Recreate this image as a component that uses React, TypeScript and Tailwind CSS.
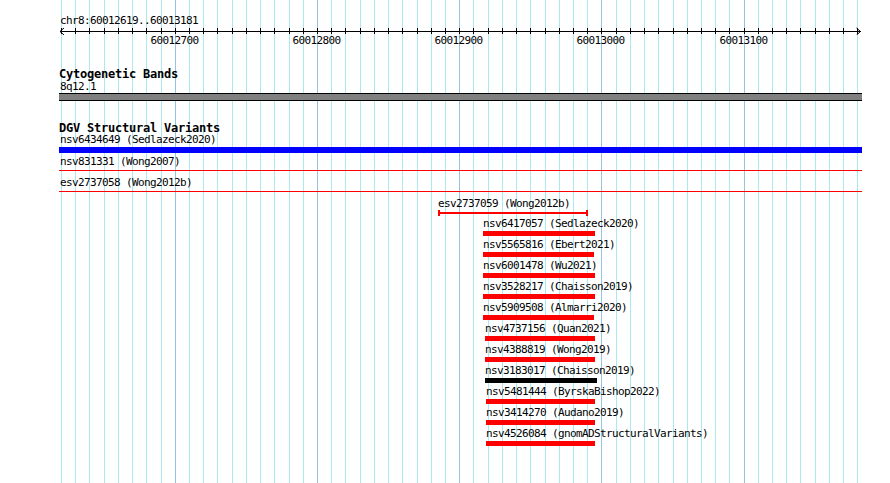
import React from "react";

const xk = (k: number) => Math.round(61 + 14.221 * k);
const LEFT = 59;

const majors = [
  { k: 8, label: "60012700" },
  { k: 18, label: "60012800" },
  { k: 28, label: "60012900" },
  { k: 38, label: "60013000" },
  { k: 48, label: "60013100" },
];

const stacked = [
  { name: "nsv6417057 (Sedlazeck2020)", x1: 483, x2: 595, c: "red" },
  { name: "nsv5565816 (Ebert2021)", x1: 483, x2: 594, c: "red" },
  { name: "nsv6001478 (Wu2021)", x1: 483, x2: 595, c: "red" },
  { name: "nsv3528217 (Chaisson2019)", x1: 483, x2: 595, c: "red" },
  { name: "nsv5909508 (Almarri2020)", x1: 483, x2: 594, c: "red" },
  { name: "nsv4737156 (Quan2021)", x1: 485, x2: 595, c: "red" },
  { name: "nsv4388819 (Wong2019)", x1: 485, x2: 595, c: "red" },
  { name: "nsv3183017 (Chaisson2019)", x1: 485, x2: 597, c: "black" },
  { name: "nsv5481444 (ByrskaBishop2022)", x1: 486, x2: 595, c: "red" },
  { name: "nsv3414270 (Audano2019)", x1: 486, x2: 595, c: "red" },
  { name: "nsv4526084 (gnomADStructuralVariants)", x1: 486, x2: 595, c: "red" },
];

function Ruler() {
  const ticks = Array.from({ length: 57 }, (_, k) => xk(k) - LEFT + 0.5);
  return (
    <svg width={803} height={8} className="block">
      <g shapeRendering="crispEdges" stroke="#000" strokeWidth={1}>
        <line x1={1} y1={4.5} x2={801.5} y2={4.5} />
        {ticks.map((t, i) => (
          <line key={i} x1={t} y1={1} x2={t} y2={7} />
        ))}
      </g>
      <polyline points="5,1 1,4.5 5,8" fill="none" stroke="#000" strokeWidth={1} />
      <polyline points="797.5,1 801.5,4.5 797.5,8" fill="none" stroke="#000" strokeWidth={1} />
    </svg>
  );
}

export default function App() {
  return (
    <div className="relative w-[890px] h-[483px] overflow-hidden bg-white text-black font-['DejaVu_Sans_Mono','Liberation_Mono',monospace] text-[11px] tracking-[-0.62px] leading-[12px]">
      {/* grid lines (background layer) */}
      <div className="absolute inset-0">
        {Array.from({ length: 57 }, (_, k) => (
          <div
            key={k}
            className={k % 10 === 8 ? "absolute top-0 bottom-0 w-px bg-[#98c3e2]" : "absolute top-0 bottom-0 w-px bg-[#abe8ef]"}
            style={{ left: xk(k) }}
          />
        ))}
      </div>

      <div className="relative flex flex-col ml-[59px] w-[803px] pt-[15px]">
        <div className="h-[12px] pl-[1px] whitespace-nowrap">chr8:60012619..60013181</div>
        <Ruler />
        <div className="relative h-[12px]">
          {majors.map((m) => (
            <span
              key={m.k}
              className="absolute top-0 -translate-x-1/2 whitespace-nowrap"
              style={{ left: xk(m.k) - LEFT - 0.5 }}
            >
              {m.label}
            </span>
          ))}
        </div>

        <div className="mt-[21px] h-[13px] text-[12px] tracking-[-0.22px] leading-[13px] font-bold whitespace-nowrap">Cytogenetic Bands</div>
        <div className="h-[12px] pl-[1px]">8q12.1</div>
        <div className="h-[8px] border-y border-black bg-[#808080]" />

        <div className="mt-[21px] h-[12px] text-[12px] tracking-[-0.22px] leading-[12px] font-bold whitespace-nowrap">DGV Structural Variants</div>

        <div className="h-[12px] pl-[1px] whitespace-nowrap">nsv6434649 (Sedlazeck2020)</div>
        <div className="mt-[1px] h-[6px] bg-[#0000ff]" />

        <div className="mt-[3px] h-[12px] pl-[1px] whitespace-nowrap">nsv831331 (Wong2007)</div>
        <div className="mt-[2px] h-px bg-[#ff0000]" />

        <div className="mt-[6px] h-[12px] pl-[1px] whitespace-nowrap">esv2737058 (Wong2012b)</div>
        <div className="mt-[2px] h-px bg-[#ff0000]" />

        <div className="mt-[6px] flex flex-col items-start ml-[379px]">
          <div className="h-[12px] whitespace-nowrap">esv2737059 (Wong2012b)</div>
          <div className="h-[6px] w-[150px] flex items-center">
            <div className="w-[2px] h-full bg-[#ff0000]" />
            <div className="flex-1 h-[2px] bg-[#ff0000]" />
            <div className="w-[2px] h-full bg-[#ff0000]" />
          </div>
        </div>

        <div className="mt-[2px] flex flex-col">
          {stacked.map((f) => (
            <div key={f.name} className="flex flex-col items-start h-[21px]" style={{ paddingLeft: f.x1 - LEFT }}>
              <div className="h-[12px] whitespace-nowrap">{f.name}</div>
              <div
                className={f.c === "black" ? "mt-[1px] h-[5px] bg-black" : "mt-[1px] h-[5px] bg-[#ff0000]"}
                style={{ width: f.x2 - f.x1 }}
              />
            </div>
          ))}
        </div>
      </div>
    </div>
  );
}
